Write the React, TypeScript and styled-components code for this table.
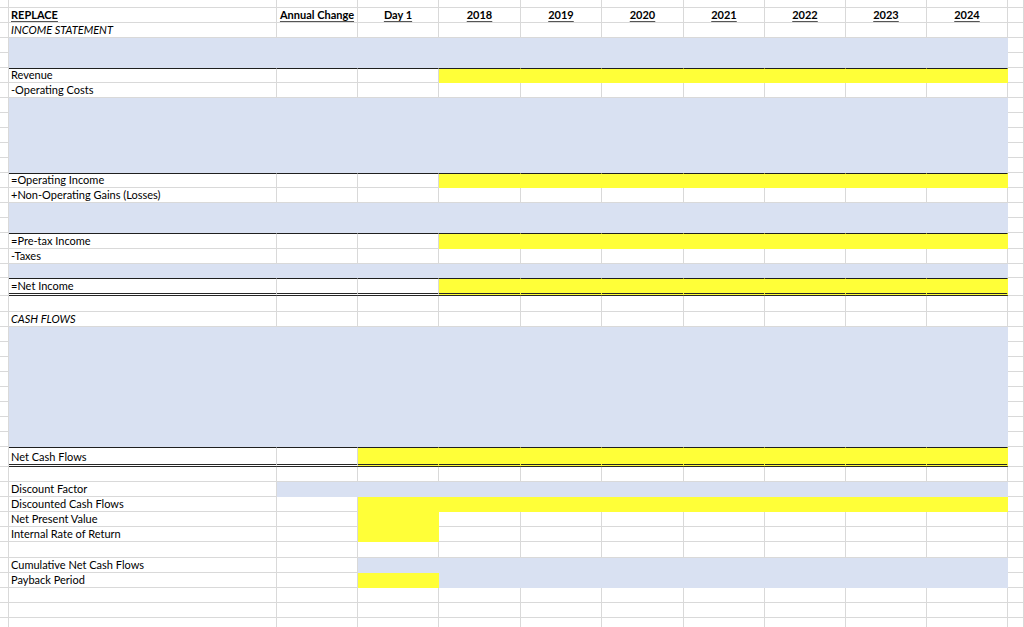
import React from "react";
import styled, { createGlobalStyle } from "styled-components";

const GlobalStyle = createGlobalStyle`
  html, body {
    margin: 0;
    padding: 0;
    background: #ffffff;
    overflow: hidden;
  }
`;

type Fill = "none" | "blue" | "yellow";

const fills: Record<Fill, string> = {
  none: "#ffffff",
  blue: "#d9e1f2",
  yellow: "#ffff38",
};

const GRID = "#d9d9d9";

// widths of the visible columns, from the clipped column A to the one after 2024
const widths = [9, 268, 81, 81, 82, 81, 82, 81, 81, 81, 81];

const Sheet = styled.div`
  width: 1024px;
  font-family: Lato, "Open Sans", "Liberation Sans", sans-serif;
  font-size: 11px;
  color: #000000;
`;

const Row = styled.div<{ $height: number }>`
  display: flex;
  height: ${(p) => p.$height}px;
`;

const Cell = styled.div<{
  $width?: number;
  $fill: Fill;
  $rule?: boolean;
  $double?: boolean;
  $align?: "left" | "center";
}>`
  box-sizing: border-box;
  flex: ${(p) => (p.$width ? `0 0 ${p.$width}px` : "1 1 auto")};
  display: flex;
  align-items: flex-end;
  justify-content: ${(p) => (p.$align === "center" ? "center" : "flex-start")};
  padding: 0 0 1px ${(p) => (p.$align === "center" ? 0 : 2)}px;
  background: ${(p) => fills[p.$fill]};
  border-right: 1px solid ${(p) => (p.$fill === "none" ? GRID : fills[p.$fill])};
  border-bottom: ${(p) =>
    p.$double
      ? "3px double #262626"
      : `1px solid ${p.$fill === "none" ? GRID : fills[p.$fill]}`};
  border-top: ${(p) => (p.$rule ? "1px solid #1f1f1f" : "none")};
  line-height: 13px;
  white-space: nowrap;
  overflow: hidden;
`;

const Heading = styled.span`
  font-weight: 700;
  text-decoration: underline;
  text-decoration-color: #555;
  text-underline-offset: 2px;
`;

const Section = styled.span`
  font-style: italic;
`;

type Spec = {
  height?: number;
  label?: React.ReactNode;
  fill?: string;
  rule?: boolean;
  double?: boolean;
  header?: boolean;
};

const blank = "..........";
const blue = "bbbbbbbbbb";

const rows: Spec[] = [
  { height: 8 },
  { header: true, label: <Heading>REPLACE</Heading> },
  { label: <Section>INCOME STATEMENT</Section> },
  { fill: blue },
  { fill: blue },
  { label: "Revenue", fill: "...yyyyyyy", rule: true },
  { label: "-Operating Costs" },
  { fill: blue },
  { fill: blue },
  { fill: blue },
  { fill: blue },
  { fill: blue },
  { label: "=Operating Income", fill: "...yyyyyyy", rule: true },
  { label: "+Non-Operating Gains (Losses)" },
  { fill: blue },
  { fill: blue },
  { label: "=Pre-tax Income", fill: "...yyyyyyy", rule: true, height: 16 },
  { label: "-Taxes" },
  { fill: blue, height: 14 },
  { label: "=Net Income", fill: "...yyyyyyy", rule: true, double: true, height: 18 },
  { height: 16 },
  { label: <Section>CASH FLOWS</Section> },
  { fill: blue },
  { fill: blue },
  { fill: blue },
  { fill: blue },
  { fill: blue },
  { fill: blue },
  { fill: blue },
  { fill: blue },
  { label: "Net Cash Flows", fill: "..yyyyyyyy", rule: true, double: true, height: 20 },
  {},
  { label: "Discount Factor", fill: ".bbbbbbbbb" },
  { label: "Discounted Cash Flows", fill: "..yyyyyyyy" },
  { label: "Net Present Value", fill: "..y......." },
  { label: "Internal Rate of Return", fill: "..y......." },
  { height: 16 },
  { label: "Cumulative Net Cash Flows", fill: "..bbbbbbbb" },
  { label: "Payback Period", fill: "..ybbbbbbb" },
  {},
  {},
  {},
];

const headers = ["Annual Change", "Day 1", "2018", "2019", "2020", "2021", "2022", "2023", "2024"];

const toFill = (c: string): Fill => (c === "b" ? "blue" : c === "y" ? "yellow" : "none");

const SheetRow: React.FC<{ spec: Spec }> = ({ spec }) => {
  const pattern = spec.fill ?? blank;
  return (
    <Row $height={spec.height ?? 15}>
      <Cell $width={widths[0]} $fill="none" />
      {pattern.split("").map((c, i) => (
        <Cell
          key={i}
          $width={widths[i + 1]}
          $fill={toFill(c)}
          $rule={spec.rule}
          $double={spec.double}
          $align={i === 0 ? "left" : "center"}
        >
          {i === 0 && spec.label}
          {i > 0 && spec.header && <Heading>{headers[i - 1]}</Heading>}
        </Cell>
      ))}
      <Cell $fill="none" />
    </Row>
  );
};

const App: React.FC = () => {
  return (
    <>
      <GlobalStyle />
      <Sheet>
        {rows.map((spec, i) => (
          <SheetRow key={i} spec={spec} />
        ))}
      </Sheet>
    </>
  );
};

export default App;
